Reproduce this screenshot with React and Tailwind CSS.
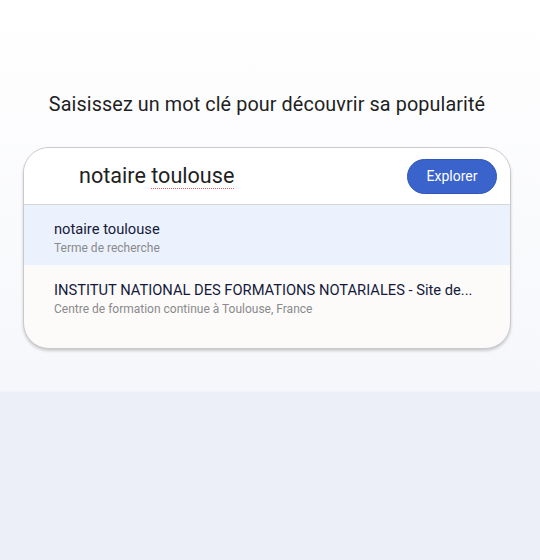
export default function App() {
  return (
    <div className="w-[540px] h-[560px] flex flex-col">
      <div className="h-[392px] bg-gradient-to-b from-white to-[#f6f7fb] flex flex-col items-center pt-[92px] pr-[6px] border-b border-[#f1f4fb]">
        <h1 className="text-[19.8px] leading-[26px] text-[#1f1f1f] font-['Roboto',sans-serif] tracking-[0.1px]">
          Saisissez un mot clé pour découvrir sa popularité
        </h1>
        <div className="mt-[29px] w-[488px] rounded-[26px] border-[1.5px] border-[#c9c9cb] shadow-[0_2px_3px_rgba(0,0,0,0.18)] overflow-hidden bg-[#fcfbfa]">
          <div className="h-[57px] bg-white flex items-center justify-between pl-[55px] pr-[13px] border-b border-[#d6d6d8]">
            <span className="text-[21.6px] text-[#1f1f1f] font-['Roboto',sans-serif]">
              notaire{" "}
              <span className="underline decoration-dotted decoration-[#e06060] underline-offset-[5px] decoration-[1px]">toulouse</span>
            </span>
            <button className="w-[90px] h-[35px] rounded-full bg-[#3a63cc] text-white text-[14px] font-['Roboto',sans-serif] border border-[#3157bb]">
              Explorer
            </button>
          </div>
          <div className="h-[60px] bg-[#ebf2fd] flex flex-col justify-center pl-[30px] pt-[5px]">
            <div className="text-[14.7px] leading-[19px] text-[#15193a] font-['Roboto',sans-serif]">notaire toulouse</div>
            <div className="text-[12px] leading-[16px] text-[#8a8a8c] font-['Roboto',sans-serif] mt-[1px]">Terme de recherche</div>
          </div>
          <div className="h-[83px] flex flex-col pl-[30px] pt-[16px]">
            <div className="text-[14.7px] leading-[19px] text-[#15193a] font-['Roboto',sans-serif]">INSTITUT NATIONAL DES FORMATIONS NOTARIALES - Site de...</div>
            <div className="text-[12px] leading-[16px] text-[#8a8a8c] font-['Roboto',sans-serif] mt-[1px]">Centre de formation continue à Toulouse, France</div>
          </div>
        </div>
      </div>
      <div className="flex-1 bg-[#eceff8]"></div>
    </div>
  );
}
